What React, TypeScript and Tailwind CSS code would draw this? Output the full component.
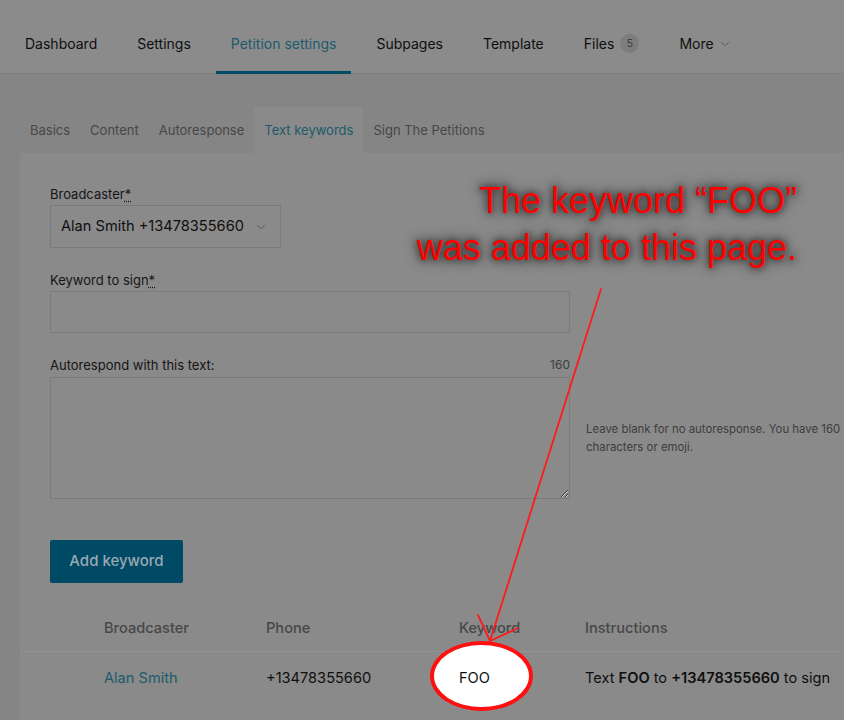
import React from "react";

const navItems = [
  { label: "Dashboard" },
  { label: "Settings" },
  { label: "Petition settings", active: true },
  { label: "Subpages" },
  { label: "Template" },
  { label: "Files", badge: "5" },
  { label: "More", caret: true },
];

const subTabs = ["Basics", "Content", "Autoresponse", "Text keywords", "Sign The Petitions"];

function Chevron({ className }: { className?: string }) {
  return (
    <svg viewBox="0 0 12 8" className={className} fill="none" stroke="currentColor" strokeWidth="1.2">
      <polyline points="1,1.5 6,6.5 11,1.5" />
    </svg>
  );
}

function Required() {
  return <abbr className="no-underline"><span className="underline decoration-dotted underline-offset-2">*</span></abbr>;
}

export default function App() {
  return (
    <div className="relative h-[720px] w-[844px] overflow-hidden bg-[#858585] font-[Inter,sans-serif] text-[#0f0f0f]">
      {/* top nav */}
      <nav className="flex h-[74px] items-end gap-[10px] border-b border-[#7e7e7e] bg-[#8b8b8b] pl-[10px]">
        {navItems.map((item) => (
          <div
            key={item.label}
            className={`-mb-px flex h-[60px] items-center border-b-[3px] px-[15px] pt-[2px] text-[14px] ${
              item.active ? "border-[#004b66] text-[#1c5a6d]" : "border-transparent text-[#0f0f0f]"
            }`}
          >
            {item.label}
            {item.badge ? (
              <span className="ml-[6px] flex h-[19px] w-[19px] items-center justify-center rounded-full bg-[#7d7d7d] text-[11px] text-[#404040]">
                {item.badge}
              </span>
            ) : null}
            {item.caret ? <Chevron className="ml-[6px] h-[6px] w-[10px] text-[#555]" /> : null}
          </div>
        ))}
      </nav>

      {/* sub tabs */}
      <div className="ml-[20px] mt-[33px] flex h-[46px]">
        {subTabs.map((tab) => (
          <div
            key={tab}
            className={`flex items-center px-[10px] pt-[2px] text-[13px] ${
              tab === "Text keywords" ? "bg-[#8a8a8a] text-[#1c5a6d]" : "text-[#474747]"
            }`}
          >
            {tab}
          </div>
        ))}
      </div>

      {/* card */}
      <div className="ml-[20px] h-[600px] bg-[#8a8a8a] pt-[32px]">
        <div className="pl-[30px]">
          <label className="block text-[13px] leading-[18px] text-[#151515]">
            Broadcaster<Required />
          </label>
          <div className="mt-[2px] flex h-[43px] w-[231px] items-center justify-between border border-[#7b7b7b] pl-[10px] pr-[14px] text-[14.6px]">
            <span>Alan Smith +13478355660</span>
            <Chevron className="h-[6px] w-[10px] text-[#555]" />
          </div>

          <label className="mt-[23px] block text-[13px] leading-[18px] text-[#151515]">
            Keyword to sign<Required />
          </label>
          <div className="mt-[2px] h-[42px] w-[520px] border border-[#7b7b7b]" />

          <div className="mt-[23px] flex w-[520px] justify-between text-[13px] leading-[18px]">
            <label className="text-[#151515]">Autorespond with this text:</label>
            <span className="text-[12px] text-[#3d3d3d]">160</span>
          </div>
          <div className="mt-[3px] flex items-center">
            <textarea
              readOnly
              className="h-[122px] w-[520px] shrink-0 border border-[#7b7b7b] bg-transparent outline-none"
            />
            <p className="ml-[16px] w-[272px] shrink-0 text-[11.4px] leading-[18px] text-[#3d3d3d]">
              Leave blank for no autoresponse. You have 160 characters or emoji.
            </p>
          </div>

          <button
            type="button"
            className="mt-[41px] flex h-[43px] w-[133px] items-center justify-center rounded-[2px] bg-[#004a66] text-[15px] font-medium text-[#9aa9b0]"
          >
            Add keyword
          </button>
        </div>

        {/* table */}
        <div className="mt-[24px] grid grid-cols-[84px_162px_193px_126px_1fr] text-[14.6px]">
          <div className="h-[45px] border-b border-[#929292]" />
          <div className="flex h-[45px] items-center border-b border-[#929292] font-medium text-[#474747]">Broadcaster</div>
          <div className="flex h-[45px] items-center border-b border-[#929292] font-medium text-[#474747]">Phone</div>
          <div className="flex h-[45px] items-center border-b border-[#929292] font-medium text-[#474747]">Keyword</div>
          <div className="flex h-[45px] items-center border-b border-[#929292] font-medium text-[#474747]">Instructions</div>

          <div className="h-[50px]" />
          <div className="flex h-[50px] items-center pt-[3px] text-[#1c5a6d]">Alan Smith</div>
          <div className="flex h-[50px] items-center pt-[3px]">+13478355660</div>
          <div className="relative z-20 flex h-[50px] items-center pt-[3px]">FOO</div>
          <div className="flex h-[50px] items-center whitespace-nowrap pt-[3px]">
            Text&nbsp;<b className="font-semibold">FOO</b>&nbsp;to&nbsp;<b className="font-semibold">+13478355660</b>&nbsp;to sign
          </div>
        </div>
      </div>

      {/* annotation */}
      <div className="absolute left-[430px] top-[641px] z-10 h-[70px] w-[103px] rounded-[50%] border-[4px] border-[#ff1010] bg-white" />
      <svg className="pointer-events-none absolute left-0 top-0 z-30 h-[720px] w-[844px]" viewBox="0 0 844 720">
        <g stroke="#ff1a1a" strokeWidth="1.8" fill="none" strokeLinecap="round">
          <line x1="601" y1="289" x2="490" y2="641" />
          <line x1="478" y1="615" x2="490" y2="641" />
          <line x1="518" y1="628" x2="490" y2="641" />
        </g>
      </svg>
      <div className="absolute right-[47px] top-[177px] z-30 text-right font-['Liberation_Sans',Arial,sans-serif] text-[36px] leading-[47px] text-[#ff0000] [text-shadow:0_0_6px_#3c3c3c,0_0_10px_#3c3c3c,0_0_14px_#505050]">
        The keyword “FOO”
        <br />
        was added to this page.
      </div>
    </div>
  );
}
